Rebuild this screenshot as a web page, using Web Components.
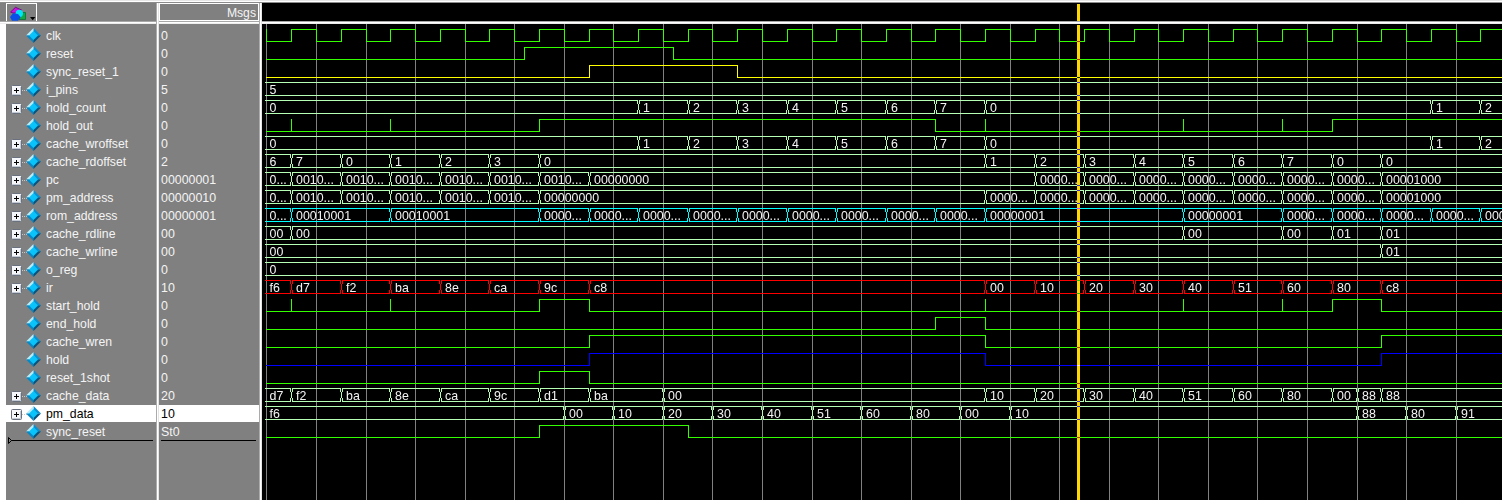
<!DOCTYPE html>
<html lang="en">
<head>
<meta charset="utf-8">
<title>Wave</title>
<style>
html,body{margin:0;padding:0;background:#fff}
body{font-family:"Liberation Sans",Arial,sans-serif;font-size:12.4px;overflow:hidden}
</style>
</head>
<body>
<wave-window></wave-window>
<script>
const GRID=[266,316,366,415,465,514,564,613,663,712,762,812,861,911,960,1010,1059,1109,1158,1208,1257,1307,1357,1406,1456];
const HALF=[291,341,390,440,489,539,589,638,688,737,787,836,886,935,985,1035,1084,1134,1183,1233,1282,1332,1381,1431,1480];
const GREEN='#33ff00',BUS='#b4ffb4',X0=262,W=1240;
const from=(x,labels)=>{const i=HALF.indexOf(x);return labels.map((l,k)=>[HALF[i+k],l]);};
const rep=(n,l)=>Array(n).fill(l);
const clk=[[266,0]];
HALF.forEach((h,i)=>{clk.push([h,1]);if(GRID[i+1])clk.push([GRID[i+1],0]);});
const COUNT=[[265,'0'],...from(638,['1','2','3','4','5','6','7','0']),[1431,'1'],[1480,'2']];
// bit: level changes [x, level]; spikes: zero-width pulses; bus: value changes [x, label]
const SIGNALS=[
 {name:'clk',value:'0',bit:clk,spikes:[266]},
 {name:'reset',value:'0',bit:[[266,0],[524,1],[673,0]]},
 {name:'sync_reset_1',value:'0',color:'#ffff00',bit:[[266,0],[589,1],[737,0]]},
 {name:'i_pins',value:'5',bus:[[265,'5']]},
 {name:'hold_count',value:'0',bus:COUNT},
 {name:'hold_out',value:'0',bit:[[266,0],[539,1],[935,0],[1332,1]],spikes:[291,390,985,1183,1282]},
 {name:'cache_wroffset',value:'0',bus:COUNT},
 {name:'cache_rdoffset',value:'2',bus:[[265,'6'],...from(291,['7','0','1','2','3','0']),...from(985,['1','2','3','4','5','6','7','0','0'])]},
 {name:'pc',value:'00000001',bus:[[265,'0...'],...from(291,[...rep(6,'0010...'),'00000000']),...from(1035,[...rep(7,'0000...'),'00001000'])]},
 {name:'pm_address',value:'00000010',bus:[[265,'0...'],...from(291,[...rep(5,'0010...'),'00000000']),...from(985,[...rep(8,'0000...'),'00001000'])]},
 {name:'rom_address',value:'00000001',color:'#00ffff',bus:[[265,'0...'],[291,'00010001'],[390,'00010001'],...from(539,[...rep(9,'0000...'),'00000001']),[1183,'00000001'],...from(1282,rep(5,'0000...'))]},
 {name:'cache_rdline',value:'00',bus:[[265,'00'],[291,'00'],[1183,'00'],[1282,'00'],[1332,'01'],[1381,'01']]},
 {name:'cache_wrline',value:'00',bus:[[265,'00'],[1381,'01']]},
 {name:'o_reg',value:'0',bus:[[265,'0']]},
 {name:'ir',value:'10',color:'#ff0000',bus:[[265,'f6'],...from(291,['d7','f2','ba','8e','ca','9c','c8']),...from(985,['00','10','20','30','40','51','60','80','c8'])]},
 {name:'start_hold',value:'0',bit:[[266,0],[539,1],[589,0],[1332,1],[1381,0]],spikes:[291,390,985,1183,1282]},
 {name:'end_hold',value:'0',bit:[[266,0],[935,1],[985,0]]},
 {name:'cache_wren',value:'0',bit:[[266,0],[589,1],[985,0],[1381,1]]},
 {name:'hold',value:'0',color:'#0000ff',bit:[[266,0],[589,1],[985,0],[1381,1]]},
 {name:'reset_1shot',value:'0',bit:[[266,0],[539,1],[589,0]]},
 {name:'cache_data',value:'20',bus:[[265,'d7'],...from(291,['f2','ba','8e','ca','9c','d1','ba']),[663,'00'],...from(985,['10','20','30','40','51','60','80','00']),[1357,'88'],[1381,'88']]},
 {name:'pm_data',value:'10',selected:true,bus:[[265,'f6'],...['00','10','20','30','40','51','60','80','00','10'].map((l,i)=>[GRID[6+i],l]),[1357,'88'],[1406,'80'],[1456,'91']]},
 {name:'sync_reset',value:'St0',bit:[[266,0],[539,1],[688,0]]}
];

class SignalName extends HTMLElement{
 constructor(){super();this.attachShadow({mode:'open'}).innerHTML=`
<style>
:host{display:flex;height:18px;line-height:18px;font-size:12.25px;box-sizing:border-box;color:#f4f4f4;white-space:pre}
:host([selected]){color:#000;background:linear-gradient(#fff,#fff) 0 0/100% 17px no-repeat}
svg{flex:none;width:40px;height:18px}
:host(:not([bus])) .tree{display:none}
</style>
<svg viewBox="6 0 40 18">
 <g class="tree">
  <path d="M22 9.5H28" stroke="#c8c8c8" stroke-dasharray="1 1"/>
  <rect x="11.5" y="4.5" width="10" height="10" rx="1" fill="#f5f7fb" stroke="#68717d"/>
  <path d="M12 13.5H20.5V6" fill="none" stroke="#c4cad3"/>
  <path d="M14 9.5H19M16.5 7V12" stroke="#000"/>
 </g>
 <path d="M33.5 1L41 8.5H33.5Z" fill="#0a8fd0"/>
 <path d="M33.5 1L26 8.5H33.5Z" fill="#b8ecfb"/>
 <path d="M26 8.5L33.5 16V8.5Z" fill="#0787c4"/>
 <path d="M41 8.5L33.5 16V8.5Z" fill="#04547f"/>
 <path d="M33.5 4L38 8.5L33.5 13L29 8.5Z" fill="#08c4fa"/>
</svg><slot></slot>`;}
}
customElements.define('signal-name',SignalName);

class SignalValue extends HTMLElement{
 constructor(){super();this.attachShadow({mode:'open'}).innerHTML=`
<style>
:host{display:block;height:18px;line-height:18px;padding-left:2px;color:#f4f4f4}
:host([selected]){color:#000;background:linear-gradient(#fff,#fff) 0 0/100% 17px no-repeat}
</style><slot></slot>`;}
}
customElements.define('signal-value',SignalValue);

class WaveTrace extends HTMLElement{
 constructor(){super();this.attachShadow({mode:'open'});}
 set signal(s){
  const color=s.color||(s.bus?BUS:GREEN),R=[];
  const rect=(x,y,w,h)=>R.push(`M${x} ${y}h${w}v${h}h${-w}z`);
  let text='';
  if(s.bit){
   s.bit.forEach(([x,v],i)=>{
    const end=i+1<s.bit.length?s.bit[i+1][0]:1502,y=v?2:14;
    rect(x,y,end-x+(v?1:0),1);
    if(i)rect(x,2,1,v?13:12);
   });
   (s.spikes||[]).forEach(x=>rect(x,2,1,12));
  }else{
   s.bus.forEach(([x,l],i)=>{
    const end=i+1<s.bus.length?s.bus[i+1][0]:1502,a=i?x+1:x;
    rect(a,1,end-a,1);rect(a,14,end-a,1);
    if(i){rect(x-1,1,1,4);rect(x+1,1,1,4);rect(x,5,1,6);rect(x-1,11,1,4);rect(x+1,11,1,4);}
    text+=`<text x="${i?x+5:x+4.6}" y="13">${l}</text>`;
   });
  }
  this.shadowRoot.innerHTML=`
<style>:host{display:block;height:18px}svg{display:block}text{fill:#f4f4f4}</style>
<svg width="${W}" height="18" viewBox="${X0} 0 ${W} 18"><path fill="${color}" shape-rendering="crispEdges" d="${R.join('')}"/>${text}</svg>`;
 }
}
customElements.define('wave-trace',WaveTrace);

class WaveView extends HTMLElement{
 constructor(){
  super();
  const grid=GRID.map(x=>`linear-gradient(#808080,#808080) ${x-X0}px 0/1px 100% no-repeat`).join(',');
  this.attachShadow({mode:'open'}).innerHTML=`
<style>
:host{display:block;position:relative;isolation:isolate;box-sizing:border-box;padding-top:3px;overflow:hidden;background:${grid},#000}
.cursor{position:absolute;left:815px;top:1px;bottom:0;width:3px;background:#ffd700;mix-blend-mode:difference}
</style><slot></slot><div class="cursor"></div>`;}
}
customElements.define('wave-view',WaveView);

class WaveWindow extends HTMLElement{
 constructor(){
  super();
  const each=f=>SIGNALS.map(f).join('');
  const attrs=s=>(s.selected?' selected':'')+(s.bus?' bus':'');
  this.attachShadow({mode:'open'}).innerHTML=`
<style>
:host{display:grid;width:1502px;height:500px;overflow:hidden;background:#fff;
 grid-template-columns:156px 3px 100px 3px 1240px;grid-template-rows:3px 18px 3px 476px}
.top{grid-column:1/-1;background:linear-gradient(#e6e6e6 0 1px,#fff 1px 2px,#8c8c8c 2px)}
.rule{background:linear-gradient(#a8a8a8 0 1px,#fff 1px 2px,#ededed 2px)}
.bar{background:linear-gradient(90deg,#ababab 0 1px,#fff 1px 2px,#e4e4e4 2px)}
.tools{background:#808080;padding-left:6px}
.button{box-sizing:border-box;width:31px;height:18px;border:1px solid #fff;border-bottom:0}
.button svg{display:block}
.msgs{box-sizing:border-box;border:1px solid #fff;background:#808080;color:#f4f4f4;font-size:12.2px;text-align:right;padding-right:2px;line-height:18px}
.head{background:linear-gradient(#ffd700,#ffd700) 815px 1px/3px 17px no-repeat,#000}
.names{background:#808080;margin-left:6px;padding-top:3px}
.values{background:#808080;padding-top:3px}
.end{display:block;height:8px;margin-top:-5px}
</style>
<div class="top"></div>
<div class="tools"><div class="button"><svg width="29" height="17" viewBox="7 4 29 17">
 <path d="M20 12.5H25.5V19.5H19Z" fill="#12a848" stroke="#087030" stroke-width=".8"/>
 <path d="M10.5 12L15.5 7.3L21.5 10L18 13H13Z" fill="#c814e0" stroke="#600070" stroke-width=".8"/>
 <circle cx="19.3" cy="13.5" r="3.7" fill="#00e4fa"/>
 <path d="M10 17L13 13.2L18 14L20.6 17L18 20.8H12Z" fill="#0a50e8"/>
 <path d="M30 17H35.4L32.7 20.2Z" fill="#000"/></svg></div></div>
<div class="bar"></div><div class="msgs">Msgs</div><div class="bar"></div><div class="head"></div>
<div class="rule"></div><div class="bar"></div><div class="rule"></div><div class="bar"></div><div class="rule"></div>
<div class="names">${each(s=>`<signal-name${attrs(s)}>${s.name}</signal-name>`)}
 <svg class="end" width="150" height="8" viewBox="6 436 150 8"><path d="M11 440.5H153" stroke="#000"/><path d="M8.5 437.5V443.5L11.5 440.5Z" fill="#808080" stroke="#000"/></svg></div>
<div class="bar"></div>
<div class="values">${each(s=>`<signal-value${attrs(s)}>${s.value}</signal-value>`)}
 <svg class="end" width="100" height="8" viewBox="159 436 100 8"><path d="M161 440.5H256" stroke="#000"/></svg></div>
<div class="bar"></div>
<wave-view>${each(()=>'<wave-trace></wave-trace>')}</wave-view>`;
  this.shadowRoot.querySelectorAll('wave-trace').forEach((t,i)=>{t.signal=SIGNALS[i];});
 }
}
customElements.define('wave-window',WaveWindow);
</script>
</body>
</html>
